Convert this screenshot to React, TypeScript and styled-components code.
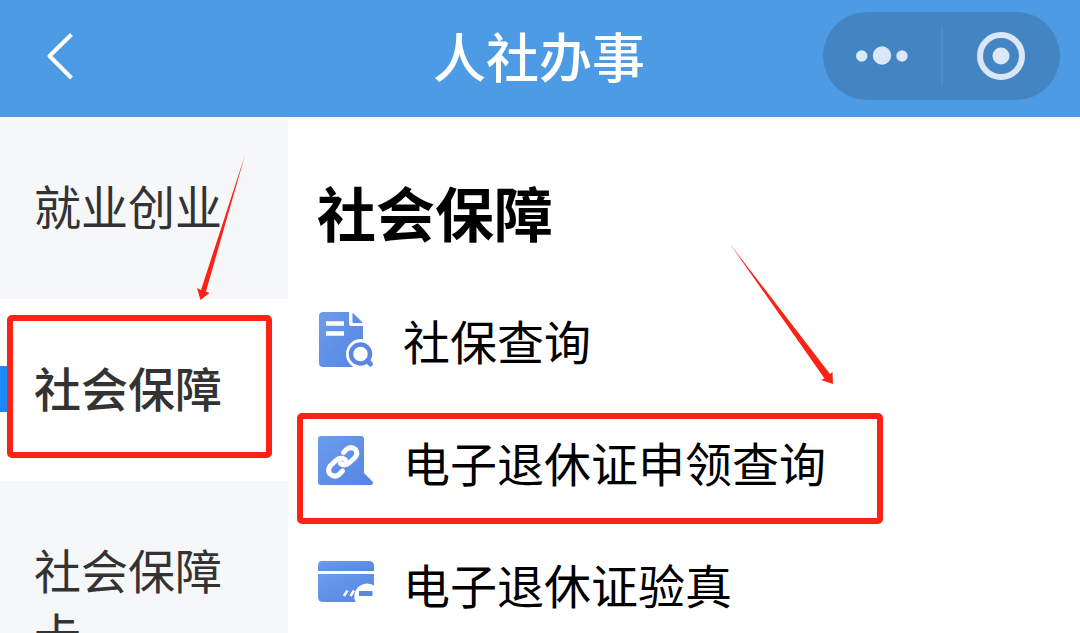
import React from 'react';
import styled, { createGlobalStyle } from 'styled-components';

const GlobalStyle = createGlobalStyle`
  *, *::before, *::after { box-sizing: border-box; }
  body {
    margin: 0;
    background: #fff;
    font-family: "Noto Sans CJK SC", "Noto Sans", sans-serif;
  }
  button { font: inherit; border: 0; padding: 0; background: none; cursor: pointer; }
`;

const Page = styled.div`
  position: relative;
  display: flex;
  flex-direction: column;
  height: 100vh;
  overflow: hidden;
`;

const Header = styled.header`
  display: grid;
  grid-template-columns: 1fr auto 1fr;
  align-items: center;
  flex: none;
  height: 117px;
  padding: 0 20px 5px 36px;
  background: #4c9be4;
`;

const BackButton = styled.button`
  display: flex;
  justify-self: start;
`;

const Title = styled.h1`
  margin: 0 0 0 -18px;
  padding-bottom: 2px;
  color: #fff;
  font-size: 53px;
  line-height: 64px;
  font-weight: 500;
`;

const Capsule = styled.div`
  display: flex;
  align-items: center;
  justify-self: end;
  width: 237px;
  height: 88px;
  border-radius: 44px;
  background: #4285c2;
`;

const CapsuleButton = styled.button`
  display: flex;
  flex: 1;
  align-items: center;
  justify-content: center;
  height: 100%;
  color: #dbe7f6;
`;

const CapsuleDivider = styled.span`
  width: 2px;
  height: 58px;
  background: #4b8dca;
`;

const Body = styled.div`
  display: flex;
  flex: 1;
  min-height: 0;
`;

const Sidebar = styled.nav`
  flex: none;
  width: 288px;
  overflow: hidden;
  background: #f6f7f9;
`;

const Category = styled.button<{ $active?: boolean }>`
  position: relative;
  display: block;
  width: 100%;
  padding: 56px 34px 62px;
  background: ${(p) => (p.$active ? '#fff' : '#f6f7f9')};
  color: #333;
  && {
    font-size: 47px;
    line-height: 64px;
    font-weight: ${(p) => (p.$active ? 500 : 400)};
  }
  text-align: left;
`;

const ActiveBar = styled.span`
  position: absolute;
  left: 0;
  top: 67px;
  width: 8px;
  height: 46px;
  background: #1989fa;
`;

const Highlight = styled.span<{ $inset: string }>`
  position: absolute;
  inset: ${(p) => p.$inset};
  border: 6px solid #fb2316;
  border-radius: 5px;
  pointer-events: none;
`;

const Content = styled.main`
  flex: 1;
  min-width: 0;
  padding: 55px 29px 0;
  overflow: hidden;
`;

const SectionTitle = styled.h2`
  margin: 0 0 30px;
  color: #000;
  font-size: 59px;
  line-height: 80px;
  font-weight: 700;
`;

const ServiceList = styled.ul`
  margin: 0;
  padding: 0;
  list-style: none;
`;

const ServiceItem = styled.li`
  display: flex;
`;

const ServiceLink = styled.a`
  position: relative;
  display: flex;
  align-items: center;
  gap: 28px;
  height: 122px;
  padding-bottom: 6px;
  color: #000;
  font-size: 47px;
  line-height: 64px;
  text-decoration: none;
  white-space: nowrap;
`;

const Arrows = styled.svg`
  position: absolute;
  left: 0;
  top: 0;
  pointer-events: none;
`;

const Gradient = ({ id }: { id: string }) => (
  <linearGradient id={id} x1="0" y1="0" x2="1" y2="1">
    <stop offset="0" stopColor="#6b9cec" />
    <stop offset="1" stopColor="#5585e0" />
  </linearGradient>
);

const SearchDocIcon = () => (
  <svg width="58" height="58" viewBox="0 0 58 58" aria-hidden="true">
    <defs><Gradient id="doc" /></defs>
    <path d="M6 1H32V13Q32 15 34 15H46V56H6Q2 56 2 52V5Q2 1 6 1Z" fill="url(#doc)" />
    <path d="M36 2.500L45 11.500H36Z" fill="#5b8ce6" stroke="#5b8ce6" strokeLinejoin="round" />
    <path d="M9 12.500H27M9 22.500H27" stroke="#fff" strokeWidth="4.500" />
    <circle cx="44" cy="43" r="15" fill="#fff" />
    <circle cx="43.500" cy="43" r="9.500" fill="none" stroke="#5988e0" strokeWidth="4.500" />
    <path d="M50.500 50L53.500 53" stroke="#5988e0" strokeWidth="5" strokeLinecap="round" />
  </svg>
);

const LinkCardIcon = () => (
  <svg width="58" height="58" viewBox="0 0 58 58" aria-hidden="true">
    <defs><Gradient id="link" /></defs>
    <path d="M4 3H44Q47 3 47 6V40L55.500 48.500Q57 51.500 54 52H4Q1 52 1 49V6Q1 3 4 3Z" fill="url(#link)" />
    <g fill="none" stroke="#fff" strokeWidth="5" strokeLinecap="round" strokeLinejoin="round">
      <path d="M26.500 19.500L30 16Q34.500 13 38.500 16.500Q41.500 20.500 37.500 25L32 30Q27.500 33.500 23.500 30.500" />
      <path d="M28.500 27Q24 23.500 19.500 27L13.500 32.500Q10 37 13 41Q17.500 45 22 41.500L25.500 38" />
    </g>
  </svg>
);

const CardIcon = () => (
  <svg width="58" height="58" viewBox="0 0 58 58" aria-hidden="true">
    <defs><Gradient id="card" /></defs>
    <path d="M5 6H52Q57 6 57 11V16H1V11Q1 6 5 6Z" fill="url(#card)" />
    <path d="M1 19H57V47H6Q1 47 1 42Z" fill="url(#card)" />
    <path d="M27 41L30.500 35.500M33.500 41L37 35.500" stroke="#fff" strokeWidth="2.500" />
    <path d="M58 31A13 13 0 0 0 39 48H58Z" fill="#fff" />
    <path d="M42 36H55.500V41H42Z" fill="#5988e0" />
  </svg>
);

const services = [
  { label: '社保查询', Icon: SearchDocIcon },
  { label: '电子退休证申领查询', Icon: LinkCardIcon, marked: true },
  { label: '电子退休证验真', Icon: CardIcon },
];

const categories = ['就业创业', '社会保障', '社会保障卡'];
const current = '社会保障';

export default function App() {
  return (
    <Page>
      <GlobalStyle />
      <Header>
        <BackButton aria-label="返回">
          <svg width="48" height="48" viewBox="0 0 48 48" fill="none">
            <path d="M35.500 2.500L13.500 24L35.500 46" stroke="#fff" strokeWidth="4" strokeLinejoin="round" />
          </svg>
        </BackButton>
        <Title>人社办事</Title>
        <Capsule>
          <CapsuleButton aria-label="更多">
            <svg width="52" height="20" viewBox="0 0 52 20" fill="currentColor">
              <circle cx="5.700" cy="10" r="5.700" />
              <circle cx="26" cy="9.500" r="9.200" />
              <circle cx="46" cy="10" r="5.700" />
            </svg>
          </CapsuleButton>
          <CapsuleDivider />
          <CapsuleButton aria-label="关闭">
            <svg width="48" height="48" viewBox="0 0 48 48">
              <circle cx="24" cy="24" r="21" fill="none" stroke="currentColor" strokeWidth="6" />
              <circle cx="24" cy="24" r="8.500" fill="currentColor" />
            </svg>
          </CapsuleButton>
        </Capsule>
      </Header>
      <Body>
        <Sidebar>
          {categories.map((name) => (
            <Category key={name} $active={name === current}>
              {name === current && <ActiveBar />}
              {name}
              {name === current && <Highlight $inset="16px 16px 23px 7px" />}
            </Category>
          ))}
        </Sidebar>
        <Content>
          <SectionTitle>社会保障</SectionTitle>
          <ServiceList>
            {services.map(({ label, Icon, marked }) => (
              <ServiceItem key={label}>
                <ServiceLink href="#">
                  <Icon />
                  {label}
                  {marked && <Highlight $inset="9px -57px 2px -20px" />}
                </ServiceLink>
              </ServiceItem>
            ))}
          </ServiceList>
        </Content>
      </Body>
      <Arrows width="900" height="400" viewBox="0 0 900 400" aria-hidden="true">
        <g fill="#fb2316">
          <path d="M245 155L206 291.500L209.500 293L200.500 300L197 288L201 290Z" />
          <path d="M730 244L830 374L832.500 372L833 384L821 380L824.500 378.500Z" />
        </g>
      </Arrows>
    </Page>
  );
}
